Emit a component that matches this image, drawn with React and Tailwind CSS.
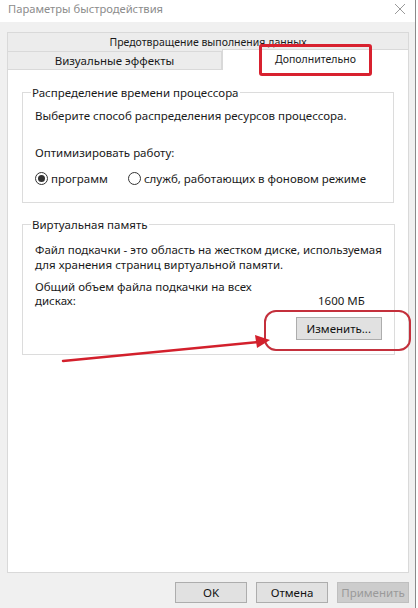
import React from "react";

const font = { fontFamily: '"Segoe UI", "Noto Sans", "Open Sans", sans-serif' };

function Radio({ checked }) {
  return (
    <span className="w-[13px] h-[13px] rounded-full border border-[#333] bg-white flex items-center justify-center shrink-0">
      {checked && <span className="w-[7px] h-[7px] rounded-full bg-[#333]" />}
    </span>
  );
}

function WinButton({ children, className = "", disabled }) {
  return (
    <div
      className={
        "flex items-center justify-center border text-[11.5px] " +
        (disabled
          ? "bg-[#cccccc] border-[#bfbfbf] text-[#9a9a9a] "
          : "bg-[#e1e1e1] border-[#adadad] text-[#111] ") +
        className
      }
    >
      {children}
    </div>
  );
}

export default function App() {
  return (
    <div
      className="relative w-[418px] h-[608px] bg-[#f0f0f0] overflow-hidden text-[#1a1a1a] text-[11.5px] flex flex-col whitespace-nowrap"
      style={font}
    >
      {/* title bar */}
      <div className="h-[22px] bg-white flex items-center justify-between pl-[8px] pr-[12px] shrink-0">
        <span className="text-[11.2px] text-[#8c8c8c] -mt-[3px]">Параметры быстродействия</span>
        <svg width="12" height="12" viewBox="0 0 12 12" className="-mt-[4px]">
          <path d="M1 1 L11 11 M11 1 L1 11" stroke="#9a9a9a" strokeWidth="1" />
        </svg>
      </div>

      <div className="flex-1 flex flex-col pl-[7px] pr-[9px] pt-[10px]">
        {/* tabs */}
        <div className="h-[19px] border border-b-0 border-[#d9d9d9] bg-[#ececec] flex items-center justify-center leading-none pt-[1px]">
          <span className="text-[10.5px]">Предотвращение выполнения данных</span>
        </div>
        <div className="h-[18px] flex">
          <div className="w-[215px] border border-b-0 border-[#d9d9d9] bg-[#ececec] flex items-center justify-center leading-none">
            Визуальные эффекты
          </div>
          <div className="flex-1 -mt-[2px] h-[21px] border border-b-0 border-[#d9d9d9] bg-white flex items-center justify-center leading-none relative z-10 pb-[2px]">
            <span className="text-[10.5px]">Дополнительно</span>
          </div>
        </div>

        {/* panel */}
        <div className="h-[504px] bg-white border border-[#d9d9d9] px-[14px] pt-[15px]">
          <fieldset className="border border-[#dcdcdc] h-[118px] px-[12px] pt-0">
            <legend className="px-[1px] -ml-[4px] leading-[15px]">Распределение времени процессора</legend>
            <div className="mt-[8px] leading-[15px]">Выберите способ распределения ресурсов процессора.</div>
            <div className="mt-[22px] leading-[15px]">Оптимизировать работу:</div>
            <div className="mt-[11px] flex items-center leading-[15px]">
              <Radio checked />
              <span className="ml-[3px]">программ</span>
              <span className="ml-[20px]">
                <Radio />
              </span>
              <span className="ml-[3px]">служб, работающих в фоновом режиме</span>
            </div>
          </fieldset>

          <fieldset className="mt-[14px] border border-[#dcdcdc] h-[138px] px-[12px] pt-0">
            <legend className="px-[1px] -ml-[4px] leading-[15px]">Виртуальная память</legend>
            <div className="mt-[10px] leading-[15px]">
              Файл подкачки - это область на жестком диске, используемая
              <br />
              для хранения страниц виртуальной памяти.
            </div>
            <div className="mt-[8px] flex items-end justify-between leading-[14px] pr-[17px]">
              <span>
                Общий объем файла подкачки на всех
                <br />
                дисках:
              </span>
              <span>1600 МБ</span>
            </div>
            <div className="mt-[9px] flex justify-end">
              <WinButton className="w-[86px] h-[23px]">Изменить...</WinButton>
            </div>
          </fieldset>
        </div>

        {/* bottom buttons */}
        <div className="mt-[9px] flex justify-end gap-[9px]">
          <WinButton className="w-[72px] h-[21px]">OK</WinButton>
          <WinButton className="w-[72px] h-[21px]">Отмена</WinButton>
          <WinButton className="w-[72px] h-[21px]" disabled>
            Применить
          </WinButton>
        </div>
      </div>

      {/* right window edge */}
      <div className="absolute top-0 right-0 h-full w-[3px] bg-white border-l border-[#8a8a8a]" />

      {/* annotations */}
      <div className="absolute left-[259px] top-[44px] w-[113px] h-[32px] border-[3px] border-[#d8212f] rounded-[3px] z-20" />
      <div className="absolute left-[264px] top-[310px] w-[147px] h-[41px] border-2 border-[#c4303c] rounded-[12px] z-20" />
      <svg className="absolute left-0 top-0 z-20" width="418" height="608">
        <line x1="63" y1="361" x2="258" y2="342" stroke="#d3202c" strokeWidth="2.5" strokeLinecap="round" />
        <polygon points="270,340 255,335 257,348" fill="#d3202c" />
      </svg>
    </div>
  );
}
